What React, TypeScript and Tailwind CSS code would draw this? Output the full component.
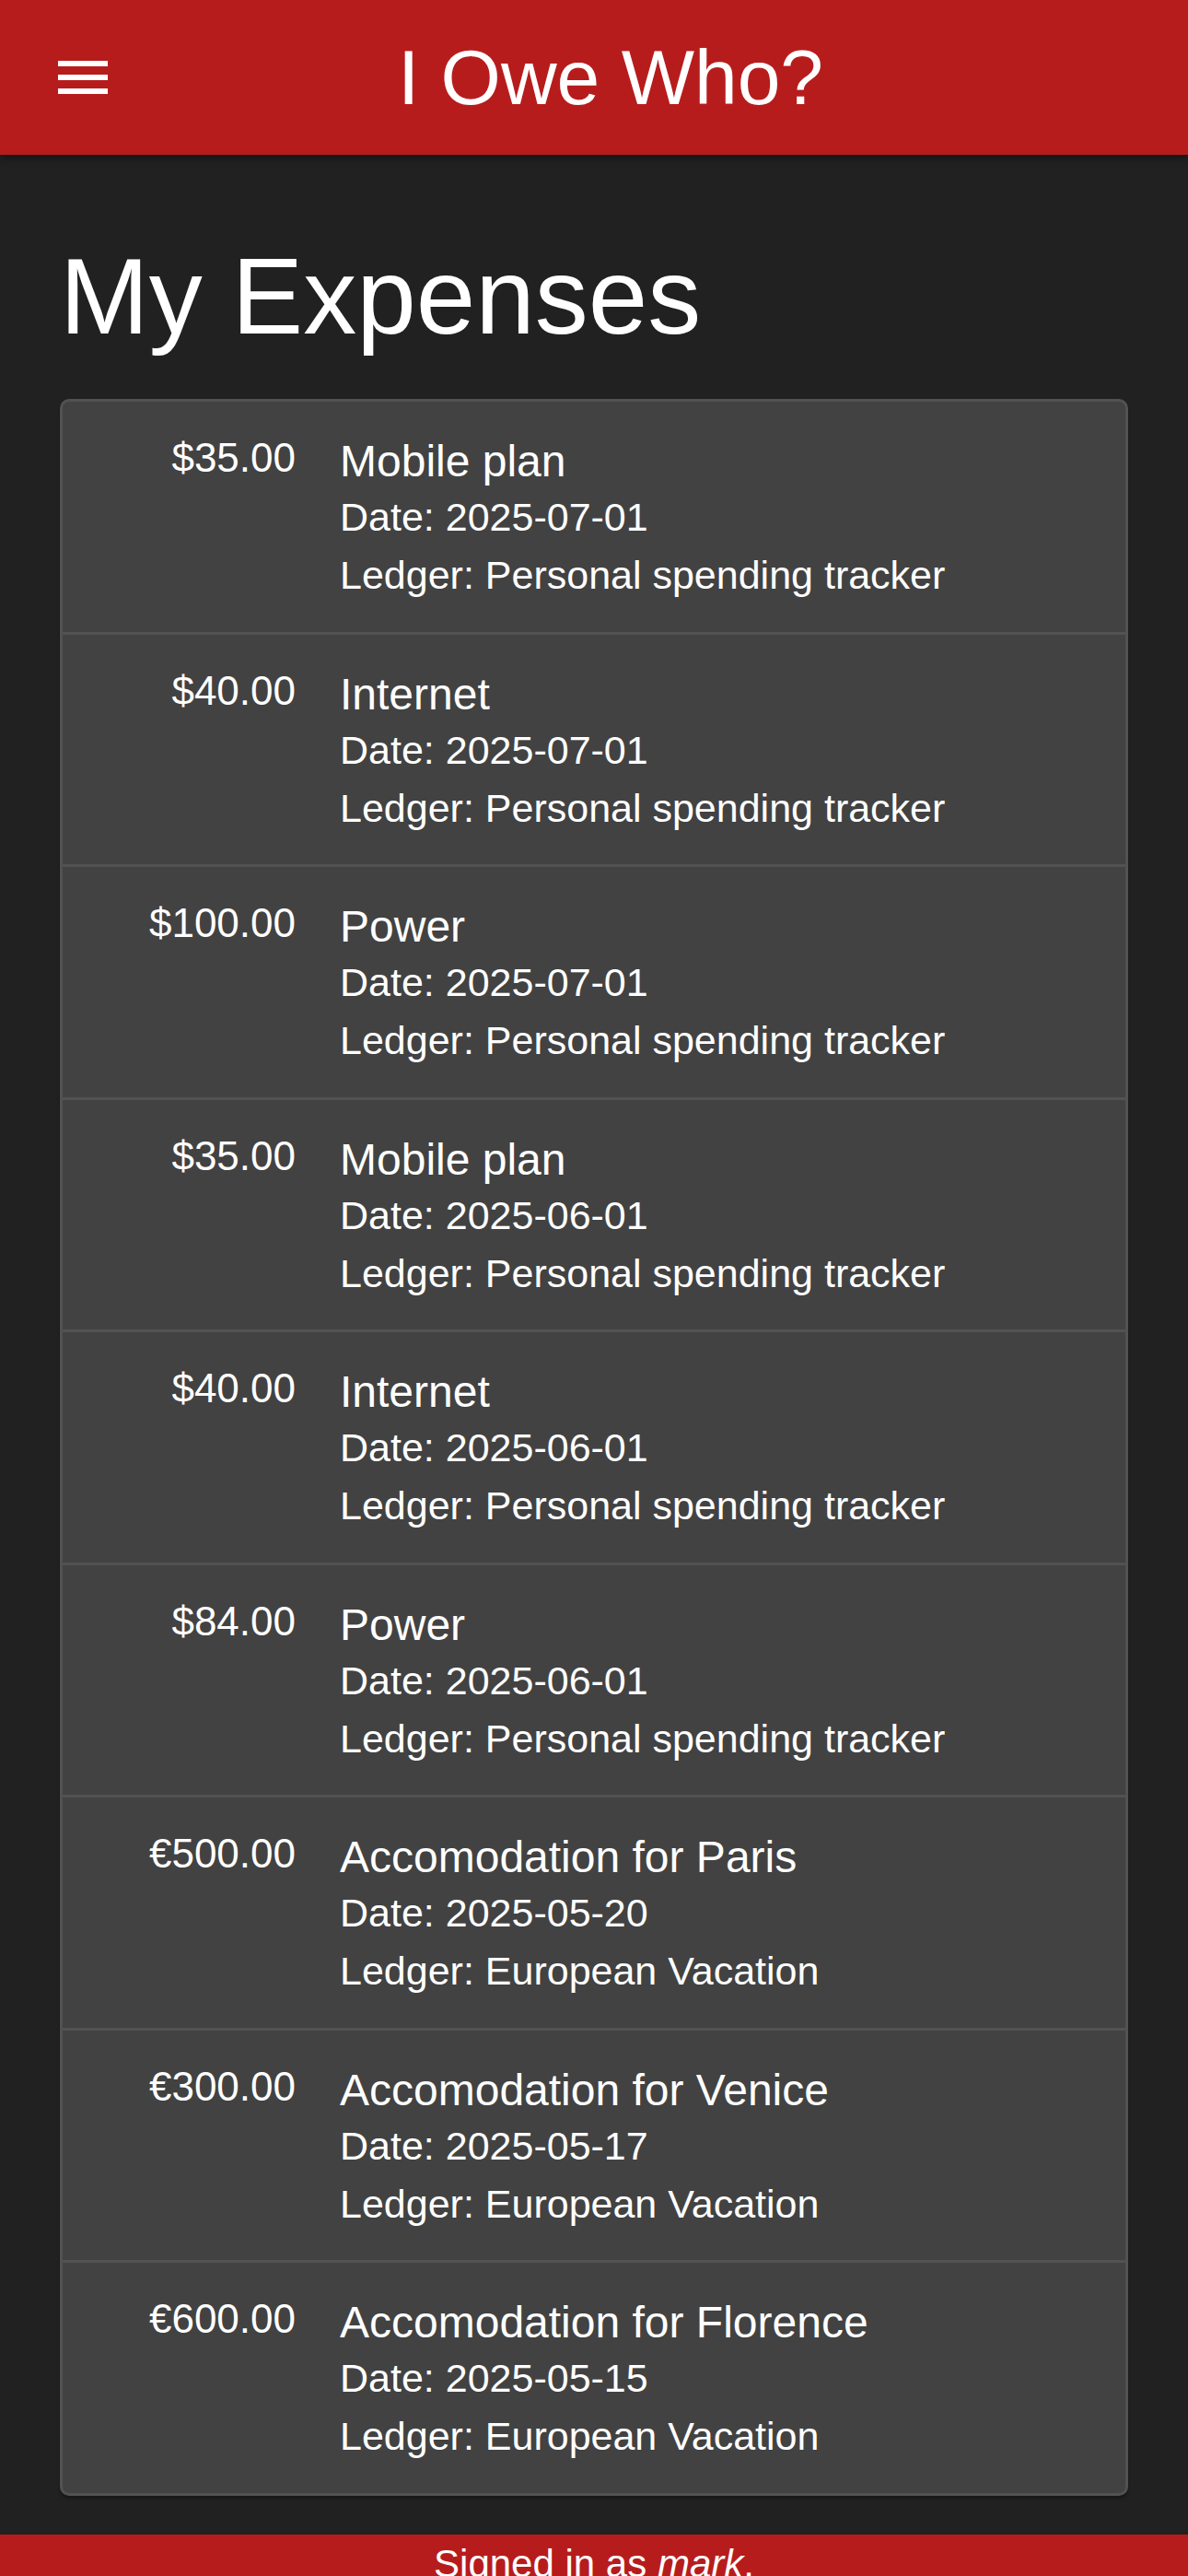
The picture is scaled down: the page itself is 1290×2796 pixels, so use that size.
import React from "react";

type Expense = {
  amount: string;
  title: string;
  date: string;
  ledger: string;
};

const expenses: Expense[] = [
  { amount: "$35.00", title: "Mobile plan", date: "2025-07-01", ledger: "Personal spending tracker" },
  { amount: "$40.00", title: "Internet", date: "2025-07-01", ledger: "Personal spending tracker" },
  { amount: "$100.00", title: "Power", date: "2025-07-01", ledger: "Personal spending tracker" },
  { amount: "$35.00", title: "Mobile plan", date: "2025-06-01", ledger: "Personal spending tracker" },
  { amount: "$40.00", title: "Internet", date: "2025-06-01", ledger: "Personal spending tracker" },
  { amount: "$84.00", title: "Power", date: "2025-06-01", ledger: "Personal spending tracker" },
  { amount: "€500.00", title: "Accomodation for Paris", date: "2025-05-20", ledger: "European Vacation" },
  { amount: "€300.00", title: "Accomodation for Venice", date: "2025-05-17", ledger: "European Vacation" },
  { amount: "€600.00", title: "Accomodation for Florence", date: "2025-05-15", ledger: "European Vacation" },
];

const font = { fontFamily: '"Liberation Sans", Arial, sans-serif' };

const MenuIcon = () => (
  <svg width="72" height="72" viewBox="0 0 24 24" fill="white">
    <path d="M3 18h18v-2H3v2zm0-5h18v-2H3v2zm0-7v2h18V6H3z" />
  </svg>
);

export default function App() {
  return (
    <div className="min-h-screen bg-[#212121] text-white flex flex-col" style={font}>
      <header className="h-[168px] bg-[#b71c1c] flex items-center shadow-[0_4px_8px_rgba(0,0,0,0.4)] relative z-10">
        <div className="w-[126px] pl-[54px] flex items-center">
          <MenuIcon />
        </div>
        <h1 className="flex-1 text-center pr-[90px] text-[84px] leading-none font-normal">I Owe Who?</h1>
      </header>

      <main className="px-[65px] pt-[85px] pb-[42px]">
        <h2 className="text-[116px] leading-[139px] font-normal">My Expenses</h2>
        <ul className="mt-[41px] bg-[#424242] border-[3px] border-[#525252] rounded-[10px] shadow-[0_3px_3px_rgba(0,0,0,0.3)]">
          {expenses.map((e, i) => (
            <li
              key={i}
              className={`flex items-start pt-[36px] pb-[29.5px] ${i < expenses.length - 1 ? "border-b-[3px] border-[#525252]" : ""}`}
            >
              <div className="w-[253px] text-right text-[44px] leading-[50px]">{e.amount}</div>
              <div className="ml-[48px] flex flex-col">
                <div className="text-[48px] leading-[58px]">{e.title}</div>
                <div className="text-[43px] leading-[63px]">Date: {e.date}</div>
                <div className="text-[43px] leading-[63px]">Ledger: {e.ledger}</div>
              </div>
            </li>
          ))}
        </ul>
      </main>

      <footer className="bg-[#b71c1c] text-center text-[42px] leading-[63px] pb-[30px]">
        Signed in as <em>mark</em>.
      </footer>
    </div>
  );
}
